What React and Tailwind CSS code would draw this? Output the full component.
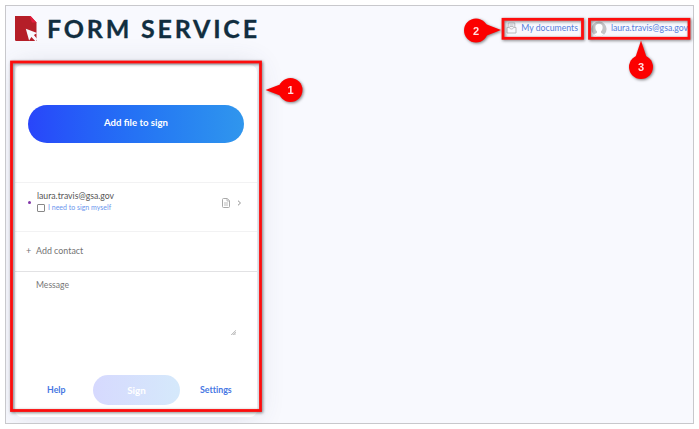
import React from "react";

const lato = "font-['Lato','Liberation_Sans',sans-serif]";

function Logo() {
  return (
    <svg width="24" height="28" viewBox="0 0 24 28" className="shrink-0">
      <path d="M1 1h15.5l6 6.5V26H2.2A1.2 1.2 0 0 1 1 24.8z" fill="#b51e28" />
      <path d="M15.5 1h1l6 6.5h-4.5z" fill="#e31c3d" />
      <path d="M11.8 13.7l11.3 4.2-3.2 2 3.3 4.1-1.5 2.6-4.3-4.5-2.3 3.5z" fill="#f8f9fd" />
    </svg>
  );
}

function TrayIcon() {
  return (
    <svg width="11" height="12" viewBox="0 0 11 12" fill="none" stroke="#b4b4b8" strokeWidth="0.9" className="shrink-0">
      <path d="M2.2 5V1h6.6v4M1 5.5h2.6c0 2 3.8 2 3.8 0H10V11H1zM3.5 3h4M3.5 4.5h4" />
    </svg>
  );
}

function Avatar() {
  return (
    <svg width="16" height="16" viewBox="0 0 16 16" className="shrink-0">
      <circle cx="8" cy="8" r="7.6" fill="#c4c4c6" />
      <path d="M8 2.8c2.6 0 3.8 1.6 3.6 3.9-.1 1.7-.8 2.8-1.6 3.5v1.2c.1.8 1.8 1 3 1.8-2.6 3-7.4 3-10 0 1.2-.8 2.9-1 3-1.8v-1.2C5.2 9.5 4.5 8.4 4.4 6.7 4.2 4.4 5.4 2.8 8 2.8z" fill="#fff" />
    </svg>
  );
}

function DocumentIcon() {
  return (
    <svg width="8" height="10" viewBox="0 0 8 10" fill="none" stroke="#a9a9a9" strokeWidth="1">
      <path d="M.5 1.5a1 1 0 0 1 1-1h3.8L7.5 2.8v5.7a1 1 0 0 1-1 1h-5a1 1 0 0 1-1-1z" />
      <path d="M5 .7V3h2.3M2 5h4M2 7h4" strokeWidth="0.8" />
    </svg>
  );
}

function Callouts() {
  return (
    <svg
      width="699"
      height="429"
      viewBox="0 0 699 429"
      className="pointer-events-none absolute left-0 top-0 [filter:drop-shadow(1px_1px_1.5px_rgba(0,0,0,0.5))]"
    >
      <g fill="none" stroke="#fd0d0d" strokeWidth="2.8">
        <rect x="11.5" y="62" width="249" height="348.5" />
        <rect x="503" y="19.3" width="79.5" height="19" />
        <rect x="589.5" y="19.3" width="99.5" height="19" />
      </g>
      <g fill="#fc0000">
        <circle cx="290.5" cy="90" r="12" />
        <path d="M265.5 90L284 83v14z" />
        <circle cx="476" cy="30.5" r="12" />
        <path d="M501 30L483 23v14z" />
        <circle cx="641" cy="67" r="12" />
        <path d="M641 40.5L634.5 60h13z" />
      </g>
      <g fill="#ffe1e1" textAnchor="middle" className="font-['Liberation_Sans',sans-serif] text-[11px] font-bold">
        <text x="290.5" y="94">1</text>
        <text x="476" y="34.5">2</text>
        <text x="641" y="71">3</text>
      </g>
    </svg>
  );
}

export default function App() {
  return (
    <div className={`relative h-[429px] w-[699px] overflow-hidden bg-white p-[5px] ${lato}`}>
      <div className="h-[419px] w-[689px] overflow-hidden border border-[#c8c8cc] bg-[#f8f9fe]">
        <header className="flex h-[59px] items-start justify-between pl-[8px]">
          <div className="flex items-start pt-[9px]">
            <Logo />
            <h1 className="ml-[9px] whitespace-nowrap text-[25px] font-bold leading-[26px] tracking-[2.8px] text-[#112e40] [-webkit-text-stroke:0.3px_#112e40]">
              FORM SERVICE
            </h1>
          </div>
          <nav className="mt-[13px] flex h-[19px] items-center text-[8.7px] text-[#5580dc]">
            <a className="mr-[13px] flex items-center gap-[4px] whitespace-nowrap">
              <TrayIcon />
              <span className="pb-px">My documents</span>
            </a>
            <a className="mr-[5px] flex items-center gap-[4px] whitespace-nowrap">
              <Avatar />
              <span className="pb-px">laura.travis@gsa.gov</span>
            </a>
          </nav>
        </header>

        <main className="ml-[9px] flex h-[352px] w-[242px] flex-col rounded-[7px] bg-white shadow-[0_0_28px_rgba(70,75,110,0.16)]">
          <section className="flex h-[118px] items-start border-b border-[#f2f2f3] px-[13px] pt-[39.5px]">
            <button className="h-[38px] w-full rounded-full bg-gradient-to-r from-[#2945fa] to-[#3096ed] text-[9.6px] font-bold text-white">
              Add file to sign
            </button>
          </section>

          <section className="flex h-[49px] items-start border-b border-[#f2f2f3] pl-[13px] pr-[15px]">
            <span className="mt-[18px] h-[3px] w-[3px] shrink-0 rounded-full bg-[#8136a8]" />
            <div className="ml-[6px] mt-[7px] flex-1">
              <div className="text-[8.7px] leading-[12px] text-[#555]">laura.travis@gsa.gov</div>
              <label className="flex items-center gap-[3px] text-[7px] leading-[11px] text-[#6b96ee]">
                <span className="h-[8px] w-[8px] rounded-[1px] border border-[#888]" />
                I need to sign myself
              </label>
            </div>
            <div className="mt-[15px] flex items-center gap-[7px]">
              <DocumentIcon />
              <svg width="5" height="6" viewBox="0 0 5 6" fill="none" stroke="#929292">
                <path d="M1 .7L3.5 3 1 5.3" />
              </svg>
            </div>
          </section>

          <section className="flex h-[40px] items-center border-b border-[#e2e2e4] pb-[2px] pl-[11px] text-[8.9px] text-[#737373]">
            <span className="w-[10px] text-[9px]">+</span>
            <span>Add contact</span>
          </section>

          <section className="flex h-[103px] items-start justify-between pl-[21px] pr-[21px] pt-[7px] text-[#777]">
            <span className="text-[8.6px] leading-[12px]">Message</span>
            <svg width="5" height="5" viewBox="0 0 5 5" className="mt-[51px]" fill="none" stroke="#a2a2a2" strokeWidth="0.8">
              <path d="M.2 5L5 .2M1.8 5L5 1.8M3.4 5L5 3.4" />
            </svg>
          </section>

          <footer className="flex h-[30px] items-center text-[8.8px] font-bold text-[#4777e3]">
            <span className="w-[78px] pl-[32px]">Help</span>
            <button className="h-[30px] w-[87px] rounded-full bg-gradient-to-r from-[#d6d9fe] to-[#d5e9fb] text-[9.8px] font-bold text-white">
              Sign
            </button>
            <span className="pl-[20px] [font-variant-ligatures:none]">Settings</span>
          </footer>
        </main>
      </div>
      <Callouts />
    </div>
  );
}
